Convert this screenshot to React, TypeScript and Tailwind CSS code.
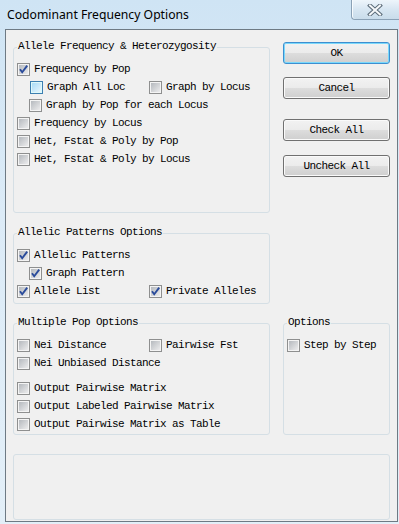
import React from "react";

const mono =
  "font-['Liberation_Mono','DejaVu_Sans_Mono',monospace] text-[11px] tracking-[-0.6px] text-black";

type BoxProps = { checked?: boolean; hover?: boolean };

function Box({ checked, hover }: BoxProps) {
  return (
    <span
      className={
        "relative w-[13px] h-[13px] shrink-0 border p-px " +
        (hover ? "border-[#3c7fb1] bg-[#def9fa]" : "border-[#8e8f8f] bg-[#f4f4f4]")
      }
    >
      <span
        className={
          "block w-full h-full " +
          (hover
            ? "bg-[linear-gradient(135deg,#a9dcf8,#e6f6fd)]"
            : "bg-[linear-gradient(135deg,#b5b9be,#ececed)]")
        }
      />
      {checked && (
        <svg className="absolute -left-px -top-px" width="13" height="13" viewBox="0 0 13 13">
          <path d="M3 6.2 L5.2 9.2 L10.2 2.6" fill="none" stroke="#2a4b9b" strokeWidth="1.9" />
        </svg>
      )}
    </span>
  );
}

type CheckProps = { label: string; checked?: boolean; hover?: boolean; indent?: number };

function Check({ label, checked, hover, indent = 0 }: CheckProps) {
  return (
    <div className="flex items-center h-[18px]" style={indent ? { paddingLeft: indent } : undefined}>
      <Box checked={checked} hover={hover} />
      <span className={mono + " ml-[4px] whitespace-nowrap leading-[18px]"}>{label}</span>
    </div>
  );
}

function Group({
  label,
  className,
  children,
}: {
  label?: string;
  className: string;
  children?: React.ReactNode;
}) {
  return (
    <div className={"relative border border-[#d5dfe5] rounded-[3px] pl-[3px] pt-[12px] " + className}>
      {label && (
        <span className={mono + " absolute left-[3px] -top-[8px] bg-[#f0f0f0] pl-px pr-px leading-[12px]"}>
          {label}
        </span>
      )}
      {children}
    </div>
  );
}

function Button({ label, def }: { label: string; def?: boolean }) {
  return (
    <div
      className={
        "h-[22px] w-[107px] rounded-[3px] border flex items-center justify-center bg-[linear-gradient(#f2f2f2_0%,#ebebeb_50%,#dddddd_50%,#cfcfcf_100%)] " +
        (def
          ? "border-[#3c8fd0] shadow-[inset_0_0_0_1px_#7ad8fb]"
          : "border-[#707070] shadow-[inset_0_0_0_1px_#fafafa]")
      }
    >
      <span className={mono}>{label}</span>
    </div>
  );
}

export default function App() {
  return (
    <div className="w-[399px] h-[524px] overflow-hidden flex flex-col bg-[linear-gradient(#cfe4f4,#dcebf7_40%,#e3eff8)]">
      {/* title bar */}
      <div className="h-[29px] shrink-0 flex items-start relative">
        <span className="ml-[7px] mt-[6px] text-[12.2px] leading-[18px] text-black font-['Noto_Sans',sans-serif]">
          Codominant Frequency Options
        </span>
        <div className="absolute left-[351px] top-0 w-[48px] h-[20px] border border-t-0 border-r-0 border-[#8aa1b6] rounded-bl-[4px] bg-[linear-gradient(#eef5fb,#d7e6f2_50%,#c9dceb)] shadow-[inset_1px_0_0_#f7fbfe] flex items-center justify-center">
          <svg width="16" height="12" viewBox="0 0 16 12" className="ml-[-2px]">
            <path d="M3 1.5 L13 10.5 M13 1.5 L3 10.5" stroke="#5b6b78" strokeWidth="4" strokeLinecap="square" />
            <path d="M3 1.5 L13 10.5 M13 1.5 L3 10.5" stroke="#f6f8fa" strokeWidth="2" strokeLinecap="square" />
          </svg>
        </div>
      </div>

      {/* client area */}
      <div className="ml-[5px] mr-[1px] mb-[2px] h-[493px] border border-[#6e7a84] bg-[#f0f0f0] pl-[7px]">
        <div className="flex items-start">
          <Group label="Allele Frequency & Heterozygosity" className="mt-[17px] w-[257px] h-[166px]">
            <Check label="Frequency by Pop" checked />
            <div className="flex">
              <div className="w-[132px]">
                <Check label="Graph All Loc" hover indent={13} />
              </div>
              <Check label="Graph by Locus" />
            </div>
            <Check label="Graph by Pop for each Locus" indent={12} />
            <Check label="Frequency by Locus" />
            <Check label="Het, Fstat & Poly by Pop" />
            <Check label="Het, Fstat & Poly by Locus" />
          </Group>
          <div className="ml-[13px] mt-[12px] flex flex-col">
            <Button label="OK" def />
            <div className="mt-[13px]">
              <Button label="Cancel" />
            </div>
            <div className="mt-[20px]">
              <Button label="Check All" />
            </div>
            <div className="mt-[14px]">
              <Button label="Uncheck All" />
            </div>
          </div>
        </div>

        <Group label="Allelic Patterns Options" className="mt-[20px] w-[257px] h-[71px]">
          <Check label="Allelic Patterns" checked />
          <Check label="Graph Pattern" checked indent={12} />
          <div className="flex">
            <div className="w-[132px]">
              <Check label="Allele List" checked />
            </div>
            <Check label="Private Alleles" checked />
          </div>
        </Group>

        <div className="flex mt-[19px]">
          <Group label="Multiple Pop Options" className="w-[257px] h-[112px]">
            <div className="flex">
              <div className="w-[132px]">
                <Check label="Nei Distance" />
              </div>
              <Check label="Pairwise Fst" />
            </div>
            <Check label="Nei Unbiased Distance" />
            <div className="mt-[7px]">
              <Check label="Output Pairwise Matrix" />
              <Check label="Output Labeled Pairwise Matrix" />
              <Check label="Output Pairwise Matrix as Table" />
            </div>
          </Group>
          <Group label="Options" className="ml-[13px] w-[107px] h-[112px]">
            <Check label="Step by Step" />
          </Group>
        </div>

        <Group className="mt-[19px] w-[377px] h-[66px]" />
      </div>
    </div>
  );
}
